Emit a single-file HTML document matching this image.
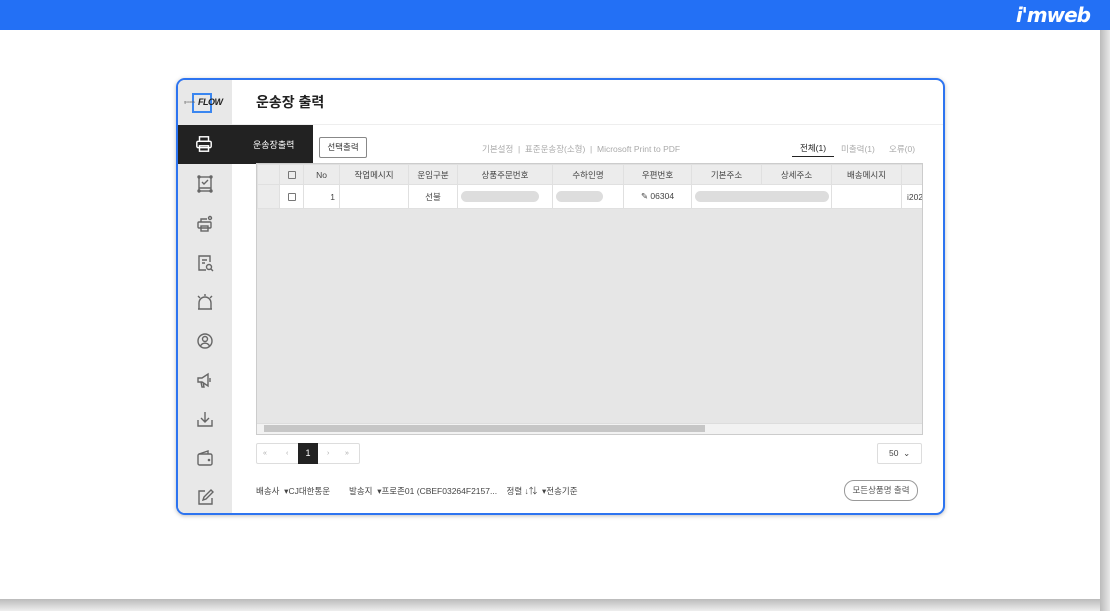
<!DOCTYPE html>
<html><head><meta charset="utf-8"><style>
*{box-sizing:border-box;margin:0;padding:0}
body{width:1110px;height:611px;background:#fff;font-family:"Liberation Sans","Noto Sans CJK KR",sans-serif;position:relative;overflow:hidden;color:#333}
.top{position:absolute;left:0;top:0;width:1110px;height:30px;background:#2370f5}
.logo{position:absolute;right:20px;top:3px;color:#fff;font-style:italic;font-weight:bold;font-size:20px;font-family:"DejaVu Sans",sans-serif;letter-spacing:-1px}
.shR{position:absolute;left:1100px;top:30px;width:10px;height:581px;background:linear-gradient(90deg,#bbb,#e8e8e8)}
.shB{position:absolute;left:0;top:599px;width:1100px;height:12px;background:linear-gradient(#bbb,#eee)}
.card{position:absolute;left:176px;top:78px;width:769px;height:437px;border:2px solid #2d74f0;border-radius:9px;background:#fff;overflow:hidden;box-shadow:0 1px 4px rgba(0,0,0,.25)}
.side{position:absolute;left:0;top:0;width:54px;height:100%;background:#e8e8e8}
.abs{position:absolute}
.ic{position:absolute;left:17px;width:20px;height:20px}
.hd{position:absolute;left:54px;top:0;right:0;height:45px;border-bottom:1px solid #eee}
.tt{position:absolute;top:12px;font-size:14px;font-weight:bold;color:#222}
.tip{position:absolute;left:0;top:45px;width:135px;height:39px;background:#222;color:#fff;font-size:9px}
table{border-collapse:collapse;font-size:8.5px;color:#444;table-layout:fixed}
td{border:1px solid #e0e0e0;text-align:center;height:20px;white-space:nowrap;overflow:hidden}
tr.h td{background:#ececec;height:20px}
tr.d td{background:#fff;height:24px}
.pill{display:inline-block;height:11px;border-radius:6px;background:#ddd;vertical-align:middle}
.cb{display:inline-block;width:8px;height:8px;border:1px solid #777;border-radius:1px;vertical-align:middle}
.sm{font-size:8.5px;color:#444}
</style></head><body>
<div class="top"><div class="logo">i'mweb</div></div>
<div class="shR"></div><div class="shB"></div>
<div class="card">
 <div class="side">
  <div class="abs" style="left:14px;top:13px;width:20px;height:20px;border:2px solid #3a86f0"></div>
  <div class="abs" style="left:6px;top:19px;font-size:4px;color:#666">goods</div>
  <div class="abs" style="left:20px;top:17px;font-size:9px;font-weight:bold;font-style:italic;color:#222;letter-spacing:-0.5px">FLOW</div>
  <svg class="ic" style="top:95px" viewBox="0 0 20 20" fill="none" stroke="#666" stroke-width="1.4"><rect x="4" y="2" width="12" height="14"/><path d="M4 13h12M7 7l2 2 4-4"/><circle cx="4" cy="2" r="1"/><circle cx="16" cy="2" r="1"/><circle cx="4" cy="16" r="1"/><circle cx="16" cy="16" r="1"/></svg>
  <svg class="ic" style="top:134px" viewBox="0 0 20 20" fill="none" stroke="#666" stroke-width="1.4"><rect x="3" y="8" width="13" height="6" rx="1"/><rect x="6" y="12" width="7" height="5"/><path d="M6 8V5h6"/><circle cx="15" cy="4" r="1.5"/></svg>
  <svg class="ic" style="top:173px" viewBox="0 0 20 20" fill="none" stroke="#666" stroke-width="1.4"><path d="M15 9V3H4v14h7M7 7h5M7 10h3"/><circle cx="14" cy="14" r="2.5"/><path d="M16 16l2 2"/></svg>
  <svg class="ic" style="top:212px" viewBox="0 0 20 20" fill="none" stroke="#666" stroke-width="1.4"><path d="M4 17V11a6 6 0 0112 0v6zM3 17h14M10 2v2M3 4l2 2M17 4l-2 2"/></svg>
  <svg class="ic" style="top:251px" viewBox="0 0 20 20" fill="none" stroke="#666" stroke-width="1.4"><circle cx="10" cy="10" r="7"/><circle cx="10" cy="8" r="2.5"/><path d="M5.5 15a5 5 0 019 0"/></svg>
  <svg class="ic" style="top:290px" viewBox="0 0 20 20" fill="none" stroke="#666" stroke-width="1.4"><path d="M3 8h4l6-4v12l-6-4H3zM6 12l1 5h2l-1-5M15 8v4"/></svg>
  <svg class="ic" style="top:329px" viewBox="0 0 20 20" fill="none" stroke="#666" stroke-width="1.4"><path d="M3 11v6h14v-6M10 3v10M6 9l4 4 4-4"/></svg>
  <svg class="ic" style="top:368px" viewBox="0 0 20 20" fill="none" stroke="#666" stroke-width="1.4"><rect x="3" y="6" width="14" height="11" rx="1.5"/><path d="M4 6l9-3v3"/><circle cx="14" cy="12" r=".6"/></svg>
  <svg class="ic" style="top:407px" viewBox="0 0 20 20" fill="none" stroke="#666" stroke-width="1.4"><path d="M10 4H4v13h13v-6M8 13l1-3 7-7 2 2-7 7z"/></svg>
 </div>
 <div class="hd"><div class="tt" style="left:24px">운송장 출력</div></div>
 <div class="tip">
  <svg class="abs" style="left:17px;top:10px" width="18" height="18" viewBox="0 0 20 20" fill="none" stroke="#fff" stroke-width="1.6"><rect x="5" y="2" width="10" height="5"/><rect x="2" y="7" width="16" height="7" rx="1.5"/><rect x="5" y="12" width="10" height="6"/></svg>
  <div class="abs" style="left:75px;top:13px">운송장출력</div>
 </div>
 <div class="abs" style="left:141px;top:57px;width:48px;height:21px;border:1px solid #888;border-radius:2px;font-size:8.5px;text-align:center;line-height:19px;color:#333">선택출력</div>
 <div class="abs sm" style="left:304px;top:63px;color:#aaa">기본설정 &nbsp;|&nbsp; 표준운송장(소형) &nbsp;|&nbsp; Microsoft Print to PDF</div>
 <div class="abs sm" style="left:622px;top:62px;color:#222">전체(1)</div>
 <div class="abs" style="left:614px;top:76px;width:42px;height:1px;background:#222"></div>
 <div class="abs sm" style="left:663px;top:63px;color:#aaa">미출력(1)</div>
 <div class="abs sm" style="left:711px;top:63px;color:#aaa">오류(0)</div>
 <div class="abs" style="left:78px;top:83px;width:667px;height:272px;background:#e6e6e6;border:1px solid #ccc;overflow:hidden">
  <table style="width:666px">
   <colgroup><col style="width:22px"><col style="width:24px"><col style="width:36px"><col style="width:69px"><col style="width:49px"><col style="width:95px"><col style="width:71px"><col style="width:68px"><col style="width:70px"><col style="width:70px"><col style="width:70px"><col style="width:22px"></colgroup>
   <tr class="h"><td></td><td><span class="cb"></span></td><td>No</td><td>작업메시지</td><td>운임구분</td><td>상품주문번호</td><td>수하인명</td><td>우편번호</td><td>기본주소</td><td>상세주소</td><td>배송메시지</td><td></td></tr>
   <tr class="d"><td style="background:#ececec"></td><td><span class="cb"></span></td><td style="text-align:right;padding-right:4px">1</td><td></td><td>선불</td><td style="text-align:left;padding-left:3px"><span class="pill" style="width:78px"></span></td><td style="text-align:left;padding-left:3px"><span class="pill" style="width:47px"></span></td><td>✎ 06304</td><td colspan="2" style="text-align:left;padding-left:3px"><span class="pill" style="width:134px"></span></td><td></td><td style="text-align:left;padding-left:5px">i202</td></tr>
  </table>
  <div class="abs" style="left:0;bottom:0;width:665px;height:11px;background:#f2f2f2;border-top:1px solid #ddd"></div>
  <div class="abs" style="left:7px;bottom:2px;width:441px;height:7px;background:#c6c6c6"></div>
 </div>
 <div class="abs" style="left:78px;top:363px;width:104px;height:21px;border:1px solid #ddd;border-radius:2px;font-size:7px;color:#aaa">
  <span class="abs" style="left:6px;top:6px">«</span><span class="abs" style="left:29px;top:6px">‹</span>
  <div class="abs" style="left:41px;top:-1px;width:20px;height:21px;background:#222;color:#fff;font-size:9px;text-align:center;line-height:21px">1</div>
  <span class="abs" style="left:70px;top:6px">›</span><span class="abs" style="left:88px;top:6px">»</span>
 </div>
 <div class="abs sm" style="left:699px;top:363px;width:45px;height:21px;border:1px solid #ddd;border-radius:2px;line-height:19px;padding-left:11px">50 &nbsp;⌄</div>
 <div class="abs sm" style="left:78px;top:405px">배송사 &nbsp;▾CJ대한통운 &nbsp; &nbsp; &nbsp; &nbsp;발송지 &nbsp;▾프로존01 (CBEF03264F2157... &nbsp; &nbsp;정렬 ↓⇅ &nbsp;▾전송기준</div>
 <div class="abs sm" style="left:666px;top:400px;width:74px;height:21px;border:1px solid #999;border-radius:10px;text-align:center;line-height:19px;color:#555">모든상품명 출력</div>
</div>
</body></html>
